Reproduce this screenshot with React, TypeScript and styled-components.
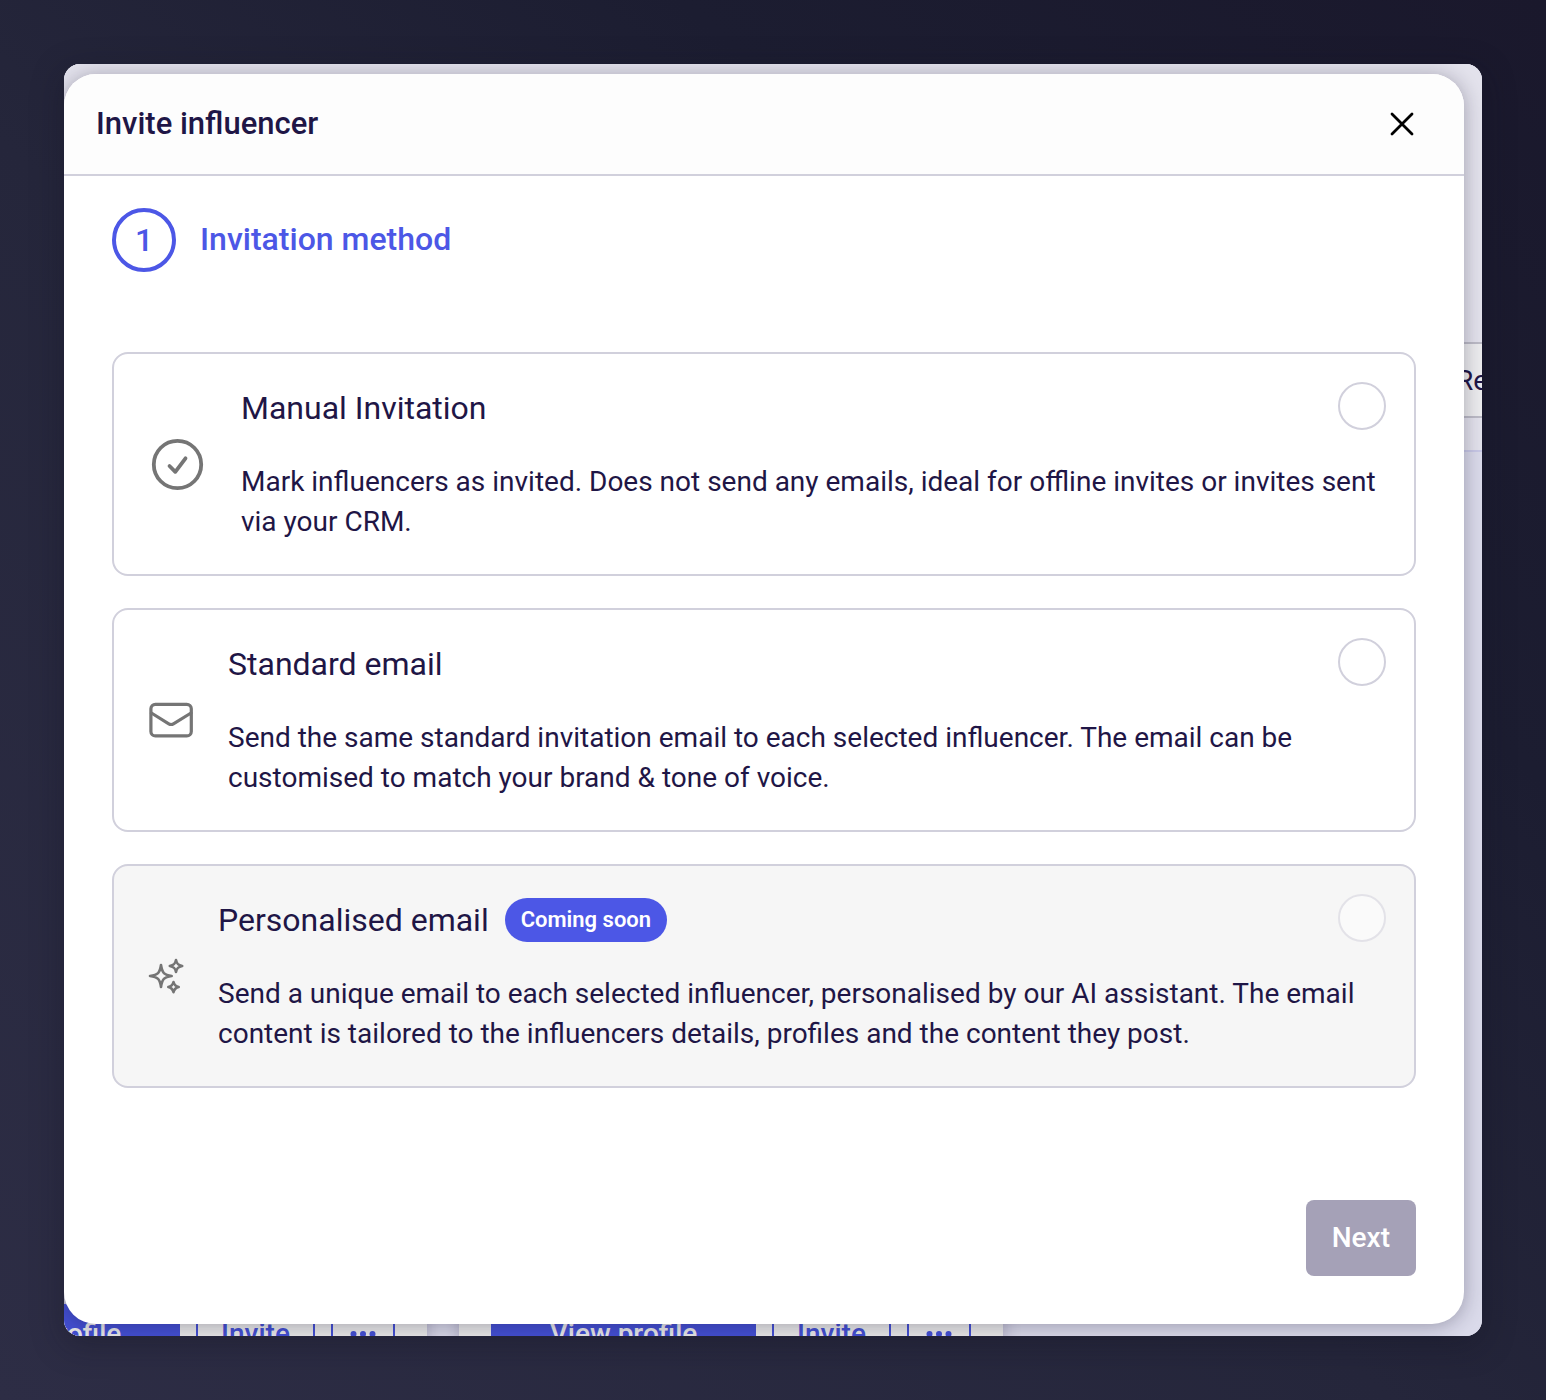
import React, { useState } from "react";
import styled, { createGlobalStyle } from "styled-components";

const GlobalStyle = createGlobalStyle`
  *, *::before, *::after { box-sizing: border-box; }
  body {
    margin: 0;
    font-family: Roboto, "Liberation Sans", sans-serif;
    color: #1f1646;
    background: #222236;
    -webkit-font-smoothing: antialiased;
  }
  button, input { font: inherit; }
`;

const Page = styled.main`
  min-height: 100vh;
  padding: 64px;
  background: linear-gradient(to top right, #2d2d45 0%, #25263b 45%, #1c1d31 72%, #1a182c 100%);
`;

const Frame = styled.div`
  position: relative;
  overflow: hidden;
  border-radius: 16px;
  background: #e2e1ed;
  box-shadow: 0 8px 32px rgba(18, 16, 32, 0.35);
`;

const Backdrop = styled.div`
  position: absolute;
  inset: 0;
  display: flex;
  flex-direction: column;
  justify-content: space-between;
  background: #dadaea;
`;

const FilterBar = styled.div`
  display: flex;
  justify-content: flex-end;
  padding: 278px 0 32px;
  border-bottom: 2px solid #c8c8e6;
  background: #e3e2ec;
`;

const FilterButton = styled.button`
  height: 76px;
  width: 50px;
  padding: 0 0 0 22px;
  border: 2px solid #bcbbc6;
  border-right: 0;
  background: #ececee;
  color: #1f1646;
  font-size: 28px;
  text-align: left;
`;

const ProfileRow = styled.div`
  display: flex;
  gap: 32px;
  height: 32px;
  margin-left: -181px;
`;

const ProfileCard = styled.div`
  display: flex;
  flex: none;
  gap: 16px;
  height: 92px;
  padding: 0 32px 32px;
  background: #e8e8e8;
  box-shadow: 0 0 16px rgba(31, 22, 70, 0.25);
`;

const CardButton = styled.button<{ $width: number; $filled?: boolean }>`
  display: flex;
  align-items: center;
  justify-content: center;
  width: ${(p) => p.$width}px;
  height: 60px;
  padding: 0;
  border: 2px solid #434fd2;
  background: ${(p) => (p.$filled ? "#434fd2" : "transparent")};
  color: ${(p) => (p.$filled ? "#e8e8e8" : "#434fd2")};
  font-size: 28px;
  font-weight: 500;
  line-height: 32px;
`;

const Dialog = styled.section`
  position: relative;
  margin: 10px 18px 12px 0;
  border-radius: 32px;
  background: #fff;
  box-shadow: 0 2px 20px rgba(20, 16, 40, 0.32);
`;

const Header = styled.header`
  display: flex;
  align-items: center;
  justify-content: space-between;
  height: 102px;
  padding: 0 48px 0 32px;
  border-bottom: 2px solid #d1d0dc;
  border-radius: 32px 32px 0 0;
  background: #fdfdfd;
`;

const Title = styled.h1`
  margin: 0;
  font-size: 31px;
  line-height: 40px;
  font-weight: 500;
`;

const CloseButton = styled.button`
  display: flex;
  padding: 0;
  border: 0;
  background: none;
  color: #000;
`;

const Body = styled.form`
  padding: 32px 48px 48px;
`;

const Step = styled.div`
  display: flex;
  align-items: center;
  gap: 24px;
  margin-bottom: 80px;
  color: #4c57e6;
  font-size: 32px;
  font-weight: 500;
`;

const StepNumber = styled.span`
  display: flex;
  align-items: center;
  justify-content: center;
  width: 64px;
  height: 64px;
  border: 4px solid #4c57e6;
  border-radius: 50%;
`;

const StepTitle = styled.h2`
  margin: 0;
  padding-bottom: 2px;
  font-size: 32px;
  line-height: 40px;
  font-weight: 500;
`;

const Options = styled.div`
  display: flex;
  flex-direction: column;
  gap: 32px;
`;

const Option = styled.label<{ $disabled?: boolean }>`
  display: flex;
  align-items: center;
  gap: 32px;
  padding: 28px 28px 28px 32px;
  border: 2px solid #d1d0dc;
  border-radius: 16px;
  background: ${(p) => (p.$disabled ? "#f6f6f6" : "#fff")};
  color: #1f1646;
`;

const OptionIcon = styled.svg`
  flex: none;
  fill: none;
  stroke: #757575;
  stroke-linecap: round;
  stroke-linejoin: round;
`;

const Copy = styled.div`
  flex: 1;
  min-width: 0;
  padding-bottom: 4px;
`;

const OptionHead = styled.div`
  display: flex;
  align-items: flex-end;
  gap: 16px;
  margin-bottom: 32px;
`;

const OptionTitle = styled.span`
  font-size: 32px;
  line-height: 44px;
`;

const Badge = styled.span`
  padding: 0 16px;
  border-radius: 22px;
  background: #4c57e6;
  color: #fff;
  font-size: 22px;
  font-weight: 600;
  line-height: 44px;
`;

const Radio = styled.input`
  appearance: none;
  width: 48px;
  height: 48px;
  margin: 0 0 0 auto;
  border: 2px solid #d1d0dc;
  border-radius: 50%;
  background: #fff;
  &:checked { border: 14px solid #4c57e6; }
  &:disabled { opacity: 0.5; }
`;

const Description = styled.p`
  margin: 0;
  font-size: 28px;
  line-height: 40px;
`;

const Footer = styled.footer`
  display: flex;
  justify-content: flex-end;
  margin-top: 112px;
`;

const NextButton = styled.button`
  height: 76px;
  padding: 0 26px 2px;
  border: 0;
  border-radius: 8px;
  background: #a5a1b7;
  color: #fff;
  font-size: 28px;
  font-weight: 500;
`;

const CheckIcon = () => (
  <OptionIcon width="63" height="63" viewBox="0 0 63 63" strokeWidth="3.8" aria-hidden="true">
    <circle cx="31.5" cy="31.5" r="23.7" />
    <path d="M23.5 33 L29.3 38.8 L39.5 25.3" />
  </OptionIcon>
);

const MailIcon = () => (
  <OptionIcon width="50" height="50" viewBox="0 0 50 50" strokeWidth="3.2" aria-hidden="true">
    <rect x="4.9" y="9.3" width="40.4" height="31.6" rx="4.5" />
    <path d="M5.4 18 L22.8 28.8 Q25.1 30.2 27.4 28.8 L45 18" />
  </OptionIcon>
);

const SparklesIcon = () => (
  <OptionIcon width="40" height="40" viewBox="0 0 40 40" strokeWidth="2.6" aria-hidden="true">
    <path d="M15 9 C16.2 17 18 18.8 25.7 20 C18 21.2 16.2 23 15 31 C13.8 23 12 21.2 4 20 C12 18.8 13.8 17 15 9 Z" />
    <path d="M30 4 C30.8 8 32.2 9.2 36.2 10 C32.2 10.8 30.8 12 30 16 C29.2 12 27.8 10.8 23.8 10 C27.8 9.2 29.2 8 30 4 Z" />
    <path d="M27.5 26 C28.3 29.2 29.4 30.3 32.7 31.1 C29.4 31.9 28.3 33 27.5 36.2 C26.7 33 25.6 31.9 22.3 31.1 C25.6 30.3 26.7 29.2 27.5 26 Z" />
  </OptionIcon>
);

const options = [
  {
    id: "manual",
    title: "Manual Invitation",
    text: "Mark influencers as invited. Does not send any emails, ideal for offline invites or invites sent via your CRM.",
    Icon: CheckIcon,
  },
  {
    id: "standard",
    title: "Standard email",
    text: "Send the same standard invitation email to each selected influencer. The email can be customised to match your brand & tone of voice.",
    Icon: MailIcon,
  },
  {
    id: "personalised",
    title: "Personalised email",
    text: "Send a unique email to each selected influencer, personalised by our AI assistant. The email content is tailored to the influencers details, profiles and the content they post.",
    Icon: SparklesIcon,
    badge: "Coming soon",
  },
];

export default function App() {
  const [method, setMethod] = useState("");

  return (
    <Page>
      <GlobalStyle />
      <Frame>
        <Backdrop>
          <FilterBar>
            <FilterButton type="button">Re</FilterButton>
          </FilterBar>
          <ProfileRow>
            {[0, 1].map((n) => (
              <ProfileCard key={n}>
                <CardButton type="button" $width={265} $filled>View profile</CardButton>
                <CardButton type="button" $width={119}>Invite</CardButton>
                <CardButton type="button" $width={64} aria-label="More">
                  <svg width="26" height="8" viewBox="0 0 26 8" fill="currentColor" aria-hidden="true">
                    <circle cx="3.5" cy="4" r="3" />
                    <circle cx="13" cy="4" r="3" />
                    <circle cx="22.5" cy="4" r="3" />
                  </svg>
                </CardButton>
              </ProfileCard>
            ))}
          </ProfileRow>
        </Backdrop>
        <Dialog role="dialog" aria-labelledby="dialog-title">
          <Header>
            <Title id="dialog-title">Invite influencer</Title>
            <CloseButton type="button" aria-label="Close">
              <svg width="28" height="28" viewBox="0 0 28 28" fill="none" stroke="currentColor" strokeWidth="2.8" strokeLinecap="round" aria-hidden="true">
                <path d="M4 4 L24 24 M24 4 L4 24" />
              </svg>
            </CloseButton>
          </Header>
          <Body onSubmit={(e) => e.preventDefault()}>
            <Step>
              <StepNumber>1</StepNumber>
              <StepTitle>Invitation method</StepTitle>
            </Step>
            <Options role="radiogroup" aria-label="Invitation method">
              {options.map(({ id, title, text, Icon, badge }) => (
                <Option key={id} htmlFor={id} $disabled={!!badge}>
                  <Icon />
                  <Copy>
                    <OptionHead>
                      <OptionTitle>{title}</OptionTitle>
                      {badge && <Badge>{badge}</Badge>}
                      <Radio
                        type="radio"
                        id={id}
                        name="method"
                        disabled={!!badge}
                        checked={method === id}
                        onChange={() => setMethod(id)}
                      />
                    </OptionHead>
                    <Description>{text}</Description>
                  </Copy>
                </Option>
              ))}
            </Options>
            <Footer>
              <NextButton type="submit" disabled={!method}>Next</NextButton>
            </Footer>
          </Body>
        </Dialog>
      </Frame>
    </Page>
  );
}
